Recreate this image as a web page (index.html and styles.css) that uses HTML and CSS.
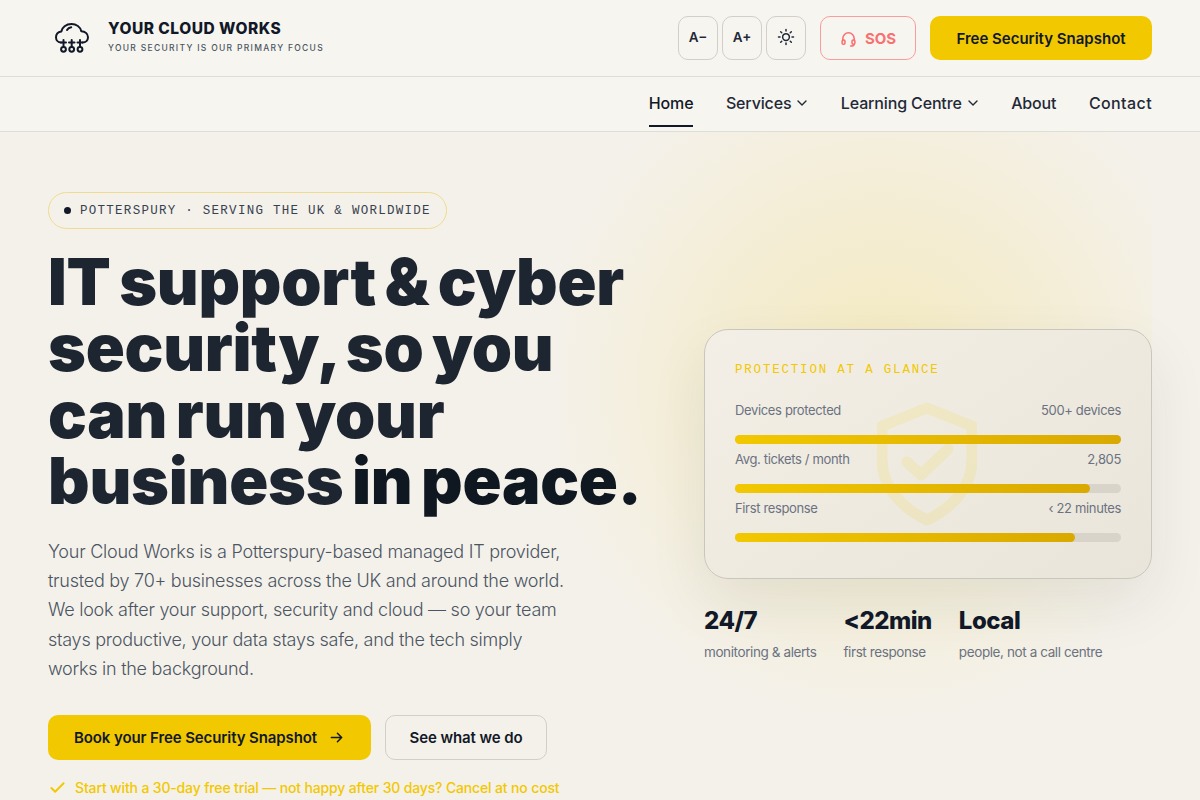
FILE: index.html
```html
<!DOCTYPE html>
<html lang="en">
<head>
<meta charset="utf-8">
<title>Your Cloud Works</title>
<link rel="stylesheet" href="styles.css">
</head>
<body>
<header class="topbar">
  <a class="brand" href="#">
    <svg class="brand-icon" viewBox="0 0 34 30" fill="none" stroke="#111827" stroke-width="2" stroke-linecap="round" stroke-linejoin="round">
      <path d="M6 19.500C3 19.500 1 17 1 14.200 1 11 3.300 9 6.300 8.500 7 4.300 11 1 16.500 1c4.800 0 8.800 3 9.800 7.300 3.700.2 6.700 2.600 6.700 6 0 3-2.300 5.200-5.300 5.200"/>
      <path d="M12 7c1-1.600 2.400-2.400 4.200-2.700"/>
      <path d="M6 19.500h5M14 19.500h5.500M22.500 19.500h5"/>
      <path d="M8.500 17v7M16.700 17v7M25 17v7"/>
      <circle cx="8.500" cy="26.300" r="2.400"/><circle cx="16.700" cy="26.300" r="2.400"/><circle cx="25" cy="26.300" r="2.400"/>
    </svg>
    <span class="brand-text">
      <span class="brand-name">YOUR CLOUD WORKS</span>
      <span class="brand-tag">YOUR SECURITY IS OUR PRIMARY FOCUS</span>
    </span>
  </a>
  <div class="tools">
    <button class="tool">A−</button>
    <button class="tool">A+</button>
    <button class="tool" aria-label="Theme">
      <svg class="sun" viewBox="0 0 24 24" fill="none" stroke="#1f2937" stroke-width="2" stroke-linecap="round"><circle cx="12" cy="12" r="4.500"/><path d="M12 2v2M12 20v2M2 12h2M20 12h2M4.900 4.900l1.400 1.400M17.700 17.700l1.400 1.400M4.900 19.100l1.400-1.400M17.700 6.300l1.400-1.400"/></svg>
    </button>
    <button class="sos">
      <svg class="sos-icon" viewBox="0 0 24 24" fill="none" stroke="currentColor" stroke-width="2.200" stroke-linecap="round" stroke-linejoin="round"><path d="M4 15v-3a8 8 0 0 1 16 0v3"/><rect x="3" y="14" width="4" height="6" rx="1.500"/><rect x="17" y="14" width="4" height="6" rx="1.500"/><path d="M20 20c0 1.500-2 2.500-5 2.500"/></svg>
      SOS
    </button>
    <a class="cta-top" href="#">Free Security Snapshot</a>
  </div>
</header>
<nav class="mainnav">
  <a class="nav-link active" href="#">Home</a>
  <a class="nav-link" href="#">Services <svg class="chev" viewBox="0 0 12 12" fill="none" stroke="currentColor" stroke-width="1.400" stroke-linecap="round" stroke-linejoin="round"><path d="M2 4l4 4 4-4"/></svg></a>
  <a class="nav-link" href="#">Learning Centre <svg class="chev" viewBox="0 0 12 12" fill="none" stroke="currentColor" stroke-width="1.400" stroke-linecap="round" stroke-linejoin="round"><path d="M2 4l4 4 4-4"/></svg></a>
  <a class="nav-link" href="#">About</a>
  <a class="nav-link" href="#">Contact</a>
</nav>
<main class="hero">
  <section class="hero-left">
    <div class="pill"><span class="dot"></span>POTTERSPURY · SERVING THE UK &amp; WORLDWIDE</div>
    <h1>
      <span class="h1-line">IT support &amp; cyber</span>
      <span class="h1-line">security, so you</span>
      <span class="h1-line">can run your</span>
      <span class="h1-line">business <span class="h1-dark">in peace.</span></span>
    </h1>
    <p class="lead">Your Cloud Works is a Potterspury-based managed IT provider, trusted by 70+ businesses across the UK and around the world. We look after your support, security and cloud — so your team stays productive, your data stays safe, and the tech simply works in the background.</p>
    <div class="actions">
      <a class="btn btn-primary" href="#">Book your Free Security Snapshot
        <svg class="arrow" viewBox="0 0 16 16" fill="none" stroke="currentColor" stroke-width="1.600" stroke-linecap="round" stroke-linejoin="round"><path d="M2.500 8h11M9 3.500L13.500 8 9 12.500"/></svg>
      </a>
      <a class="btn btn-ghost" href="#">See what we do</a>
    </div>
    <p class="trial">
      <svg class="check" viewBox="0 0 16 16" fill="none" stroke="currentColor" stroke-width="2" stroke-linecap="round" stroke-linejoin="round"><path d="M1.500 8.500l4 4 9-9"/></svg>
      Start with a 30-day free trial — not happy after 30 days? Cancel at no cost
    </p>
  </section>
  <section class="hero-right">
    <div class="card">
      <svg class="shield" viewBox="0 0 100 124" fill="none" stroke="#f2c800" stroke-width="11" stroke-linecap="round" stroke-linejoin="round"><path d="M50 6L95 24V58C95 85 75 106 50 118 25 106 5 85 5 58V24Z"/><path d="M30 60L44 73 71 47"/></svg>
      <div class="card-title">PROTECTION AT A GLANCE</div>
      <div class="stat"><div class="stat-row"><span>Devices protected</span><span>500+ devices</span></div><div class="track"><div class="fill" style="width:100%"></div></div></div>
      <div class="stat"><div class="stat-row"><span>Avg. tickets / month</span><span>2,805</span></div><div class="track"><div class="fill" style="width:92%"></div></div></div>
      <div class="stat"><div class="stat-row"><span>First response</span><span>‹ 22 minutes</span></div><div class="track"><div class="fill" style="width:88%"></div></div></div>
    </div>
    <div class="facts">
      <div class="fact"><strong>24/7</strong><span>monitoring &amp; alerts</span></div>
      <div class="fact"><strong>&lt;22min</strong><span>first response</span></div>
      <div class="fact"><strong>Local</strong><span>people, not a call centre</span></div>
    </div>
  </section>
</main>
</body>
</html>
```
FILE: styles.css
```css
* { box-sizing: border-box; }
html, body { margin: 0; height: 800px; overflow: hidden; }
body { background: #f4f1ea; color: #1f2937; font-family: "Inter", "Open Sans", sans-serif; }
a { color: inherit; text-decoration: none; }
button { font-family: inherit; cursor: pointer; }

.topbar { height: 77px; padding: 0 48px; display: flex; align-items: center; justify-content: space-between; background: #f7f5f0; border-bottom: 1px solid #e0ddd6; }
.brand { display: flex; align-items: center; gap: 19px; padding-left: 7px; }
.brand-icon { width: 34px; height: 30px; }
.brand-text { display: flex; flex-direction: column; gap: 3px; padding-bottom: 4px; }
.brand-name { font-size: 15.500px; font-weight: 800; letter-spacing: 0.500px; color: #111827; line-height: 20px; }
.brand-tag { font-size: 8.500px; font-weight: 500; letter-spacing: 1.300px; color: #4b5563; line-height: 12px; }

.tools { display: flex; align-items: center; gap: 4px; }
.tool { width: 40px; height: 44px; border: 1px solid #d2cfc8; border-radius: 10px; background: transparent; color: #1f2937; font-size: 13.500px; font-weight: 600; padding: 0 0 2px; display: flex; align-items: center; justify-content: center; }
.sun { width: 18px; height: 18px; }
.sos { width: 96px; height: 44px; margin-left: 10px; border: 1px solid #fb9c9c; border-radius: 10px; background: transparent; color: #f87171; font-size: 15px; font-weight: 700; display: flex; align-items: center; justify-content: center; gap: 8px; padding: 0; }
.sos-icon { width: 17px; height: 17px; }
.cta-top { width: 222px; height: 44px; margin-left: 10px; background: #f2c800; border-radius: 10px; color: #111827; font-size: 15px; font-weight: 600; display: flex; align-items: center; justify-content: center; }

.mainnav { height: 55px; padding: 0 48px; display: flex; justify-content: flex-end; align-items: stretch; gap: 32.500px; background: #f7f5f0; border-bottom: 1px solid #e0ddd6; }
.nav-link { display: flex; align-items: center; gap: 5px; padding-bottom: 2px; font-size: 16px; font-weight: 500; letter-spacing: -0.150px; color: #1f2937; position: relative; }
.nav-link:last-child { letter-spacing: 0.400px; }
.nav-link.active { color: #111827; }
.nav-link.active::after { content: ""; position: absolute; left: 0; right: 0; bottom: 4px; height: 2px; background: #111827; }
.chev { width: 12px; height: 12px; }

.hero { position: relative; display: grid; grid-template-columns: 1fr 448px; column-gap: 64px; padding: 60px 48px 0; height: 668px; background: #f4f1ea; overflow: hidden; }
.hero-left { position: relative; z-index: 1; min-width: 0; }
.pill { display: inline-flex; align-items: center; gap: 9px; height: 37px; padding: 0 15px; border: 1px solid #f0dc8e; border-radius: 19px; font-family: "Liberation Mono", monospace; font-size: 12.500px; letter-spacing: 1.270px; color: #374151; }
.dot { width: 7px; height: 7px; border-radius: 50%; background: #111827; }
h1 { margin: 20px 0 0; font-size: 64.500px; line-height: 66.400px; font-weight: 900; letter-spacing: -0.250px; word-spacing: -4px; color: #1c2530; }
.h1-line { display: block; white-space: nowrap; }
.h1-dark { color: #0f1720; }
.lead { margin: 22px 0 0; width: 520px; font-size: 18px; line-height: 29.300px; font-weight: 300; letter-spacing: -0.250px; color: #4b5563; }
.actions { margin-top: 32px; display: flex; gap: 14px; }
.btn { height: 45px; border-radius: 10px; display: flex; align-items: center; font-size: 15px; font-weight: 600; letter-spacing: -0.100px; color: #111827; }
.btn-primary { background: #f2c800; width: 323px; padding-left: 26px; gap: 12px; }
.arrow { width: 15px; height: 15px; }
.btn-ghost { width: 162px; justify-content: center; border: 1px solid #d2cfc8; }
.trial { margin: 19px 0 0; display: flex; align-items: center; gap: 10px; font-size: 14px; font-weight: 500; letter-spacing: -0.150px; color: #f2c800; padding-left: 2px; }
.check { width: 15px; height: 15px; }

.hero-right { position: relative; padding-top: 137px; }
.hero-right::before { content: ""; position: absolute; right: 0; top: -60px; width: 592px; height: 620px; background: radial-gradient(circle 340px at 320px 250px, rgba(242,200,0,.19), rgba(242,200,0,0) 100%); }
.card { position: relative; height: 250px; border: 1px solid #c9c6bd; border-radius: 24px; padding: 31px 30px 30px; background: linear-gradient(145deg, #f3efe6, #e9e5da); box-shadow: 0 24px 60px rgba(31,41,55,.08); overflow: hidden; }
.shield { position: absolute; left: 172px; top: 72px; width: 100px; height: 124px; opacity: .12; }
.card-title { position: relative; font-family: "Liberation Mono", monospace; font-size: 12.500px; letter-spacing: 1.800px; color: #f2c800; line-height: 18px; margin-bottom: 22px; }
.stat { position: relative; height: 49px; }
.stat-row { display: flex; justify-content: space-between; font-size: 13px; letter-spacing: -0.350px; color: #6b7280; line-height: 18px; }
.track { margin-top: 16px; height: 9px; border-radius: 5px; background: #d8d4ca; }
.fill { height: 100%; border-radius: 5px; background: linear-gradient(90deg, #f2c800, #d9a900); }

.facts { position: relative; display: flex; gap: 27px; margin-top: 25px; }
.fact { display: flex; flex-direction: column; }
.fact strong { font-size: 24px; line-height: 34px; font-weight: 800; letter-spacing: -0.500px; color: #111827; }
.fact span { margin-top: 4px; font-size: 13.500px; line-height: 20px; letter-spacing: -0.400px; color: #6b7280; }
```
